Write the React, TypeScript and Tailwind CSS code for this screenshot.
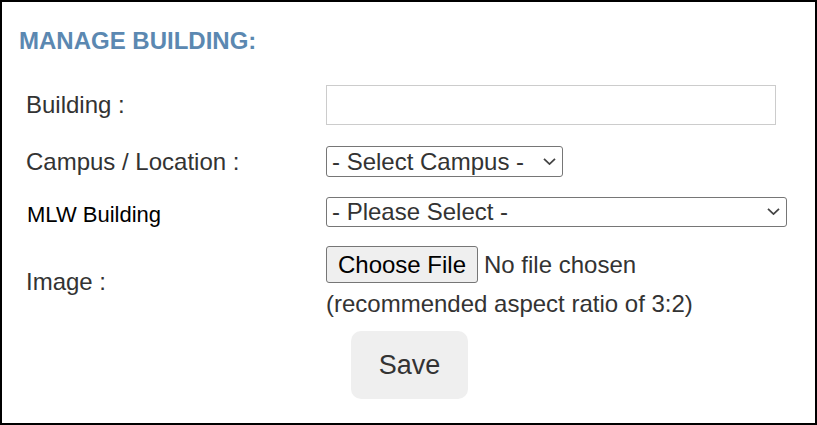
function Chevron() {
  return (
    <svg
      className="pointer-events-none absolute right-[7px] top-1/2 -translate-y-[55%]"
      width="13"
      height="8"
      viewBox="0 0 13 8"
      fill="none"
    >
      <path d="M1 1.2L6.5 6.5L12 1.2" stroke="#444" strokeWidth="1.8" />
    </svg>
  );
}

function Row({
  label,
  children,
  className = "",
  labelClass = "",
}: {
  label: string;
  children: React.ReactNode;
  className?: string;
  labelClass?: string;
}) {
  return (
    <div className={`flex ${className}`}>
      <div className={`w-[300px] shrink-0 ${labelClass}`}>{label}</div>
      <div>{children}</div>
    </div>
  );
}

export default function App() {
  return (
    <div className="w-[817px] h-[425px] border-2 border-black bg-white font-['Liberation_Sans',Arial,sans-serif] text-[24px] leading-[28px] text-[#333]">
      <h2 className="ml-[17px] mt-[25px] font-bold text-[#5b88b1]">MANAGE BUILDING:</h2>

      <div className="ml-[24px] flex flex-col">
        <Row label="Building :" className="mt-[30px] items-center">
          <input
            type="text"
            className="block h-[40px] w-[450px] border border-[#cccccc] bg-white px-2 outline-none"
          />
        </Row>

        <Row label="Campus / Location :" className="mt-[21px] items-center">
          <div className="relative w-[237px]">
            <select className="block h-[31px] w-full appearance-none rounded-[3px] border border-[#767676] bg-white pl-[5px] text-[#333] leading-[28px] outline-none">
              <option>- Select Campus -</option>
            </select>
            <Chevron />
          </div>
        </Row>

        <Row
          label="MLW Building"
          className="mt-[20px] items-start"
          labelClass="pt-[5px] pl-[1px] text-[22px] leading-[26px] text-black"
        >
          <div className="relative w-[461px]">
            <select className="block h-[30px] w-full appearance-none rounded-[3px] border border-[#767676] bg-white pl-[5px] text-[#333] leading-[28px] outline-none">
              <option>- Please Select -</option>
            </select>
            <Chevron />
          </div>
        </Row>

        <Row label="Image :" className="mt-[18px] items-center">
          <div className="flex flex-col">
            <div className="flex items-center gap-[6px]">
              <button className="h-[37px] w-[152px] rounded-[3px] border border-[#767676] bg-[#efefef] text-black">
                Choose File
              </button>
              <span>No file chosen</span>
            </div>
            <p className="mt-[7px]">(recommended aspect ratio of 3:2)</p>
          </div>
        </Row>
      </div>

      <button className="mt-[13px] ml-[349px] h-[68px] w-[117px] rounded-[10px] bg-[#efefef] text-[27px] leading-[30px] text-[#333]">
        Save
      </button>
    </div>
  );
}
